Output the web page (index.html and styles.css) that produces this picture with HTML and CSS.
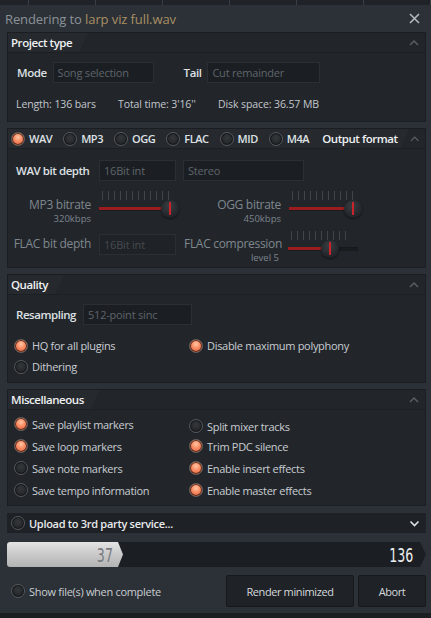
FILE: index.html
```html
<!DOCTYPE html>
<html>
<head>
<meta charset="utf-8">
<title>Rendering</title>
<link rel="stylesheet" href="styles.css">
</head>
<body>
<div class="strip"></div>
<div class="window">
	<div class="titlebar">
		<span class="title">Rendering to <span class="file">larp viz full.wav</span></span>
		<svg class="close" width="11" height="11" viewBox="0 0 11 11"><path d="M1 1L10 10M10 1L1 10" stroke="#b3b8bd" stroke-width="1.6" fill="none"/></svg>
	</div>

	<!-- project type -->
	<section class="panel project">
		<div class="panel-head">
			<div class="tab">Project type</div>
			<svg class="chev" width="10" height="7" viewBox="0 0 10 7"><polyline points="1,6 5,2 9,6" stroke="#5b6168" stroke-width="1.4" fill="none"/></svg>
		</div>
		<div class="row mode-row">
			<span class="lbl">Mode</span>
			<span class="combo w-mode">Song selection</span>
			<span class="lbl tail">Tail</span>
			<span class="combo w-tail">Cut remainder</span>
		</div>
		<div class="info-row">
			<span class="info i-len">Length: 136 bars</span>
			<span class="info i-time">Total time: 3'16''</span>
			<span class="info">Disk space: 36.57 MB</span>
		</div>
	</section>

	<!-- output format -->
	<section class="panel format">
		<div class="panel-head">
			<div class="tab wide">
				<label class="radio head-radio"><span class="dot on"></span>WAV</label>
				<label class="radio head-radio"><span class="dot"></span>MP3</label>
				<label class="radio head-radio"><span class="dot"></span>OGG</label>
				<label class="radio head-radio"><span class="dot"></span>FLAC</label>
				<label class="radio head-radio"><span class="dot"></span>MID</label>
				<label class="radio head-radio"><span class="dot"></span>M4A</label>
				<span class="head-title">Output format</span>
			</div>
			<svg class="chev" width="10" height="7" viewBox="0 0 10 7"><polyline points="1,6 5,2 9,6" stroke="#5b6168" stroke-width="1.4" fill="none"/></svg>
		</div>
		<div class="row wav-row">
			<span class="lbl wav-lbl">WAV bit depth</span>
			<span class="combo w-depth">16Bit int</span>
			<span class="combo w-stereo">Stereo</span>
		</div>
		<div class="field-row">
			<div class="side side-l">
				<div class="dim">MP3 bitrate</div>
				<div class="sub">320kbps</div>
			</div>
			<div class="slider s-mp3">
				<span class="fill" style="width:71px"></span>
				<span class="knob" style="left:71px"></span>
			</div>
			<div class="side side-r">
				<div class="dim">OGG bitrate</div>
				<div class="sub">450kbps</div>
			</div>
			<div class="slider s-ogg">
				<span class="fill" style="width:64px"></span>
				<span class="knob" style="left:64px"></span>
			</div>
		</div>
		<div class="field-row second">
			<div class="side side-l">
				<div class="dim">FLAC bit depth</div>
			</div>
			<span class="combo w-depth faded">16Bit int</span>
			<div class="side side-r">
				<div class="dim">FLAC compression</div>
				<div class="sub">level 5</div>
			</div>
			<div class="slider s-flac">
				<span class="fill" style="width:42px"></span>
				<span class="knob" style="left:42px"></span>
			</div>
		</div>
	</section>

	<!-- quality -->
	<section class="panel quality">
		<div class="panel-head">
			<div class="tab">Quality</div>
			<svg class="chev" width="10" height="7" viewBox="0 0 10 7"><polyline points="1,6 5,2 9,6" stroke="#5b6168" stroke-width="1.4" fill="none"/></svg>
		</div>
		<div class="row resample-row">
			<span class="lbl">Resampling</span>
			<span class="combo w-resample">512-point sinc</span>
		</div>
		<div class="opts">
			<label class="radio"><span class="dot on"></span>HQ for all plugins</label>
			<label class="radio"><span class="dot on"></span>Disable maximum polyphony</label>
			<label class="radio"><span class="dot"></span>Dithering</label>
		</div>
	</section>

	<!-- misc -->
	<section class="panel misc">
		<div class="panel-head">
			<div class="tab">Miscellaneous</div>
			<svg class="chev" width="10" height="7" viewBox="0 0 10 7"><polyline points="1,6 5,2 9,6" stroke="#5b6168" stroke-width="1.4" fill="none"/></svg>
		</div>
		<div class="opts misc-opts">
			<label class="radio"><span class="dot on"></span>Save playlist markers</label>
			<label class="radio nudge"><span class="dot"></span>Split mixer tracks</label>
			<label class="radio"><span class="dot on"></span>Save loop markers</label>
			<label class="radio"><span class="dot on"></span>Trim PDC silence</label>
			<label class="radio"><span class="dot"></span>Save note markers</label>
			<label class="radio"><span class="dot on"></span>Enable insert effects</label>
			<label class="radio"><span class="dot"></span>Save tempo information</label>
			<label class="radio"><span class="dot on"></span>Enable master effects</label>
		</div>
	</section>

	<div class="upload">
		<label class="radio up-radio"><span class="dot"></span>Upload to 3rd party service...</label>
		<svg class="chev-down" width="11" height="7" viewBox="0 0 11 7"><polyline points="1.5,1.5 5.5,5.5 9.5,1.5" stroke="#dfe2e5" stroke-width="1.6" fill="none"/></svg>
	</div>

	<div class="progress">
		<div class="progress-fill" style="width:116px"><span class="num">37</span></div>
		<span class="num total">136</span>
	</div>

	<div class="bottom">
		<label class="radio show"><span class="dot"></span>Show file(s) when complete</label>
		<button class="btn btn-render">Render minimized</button>
		<button class="btn btn-abort">Abort</button>
	</div>
</div>
</body>
</html>
```

FILE: styles.css
```css
*
{
	box-sizing: border-box;
}
body
{
	margin: 0;
	padding: 0;
	width: 431px;
	height: 618px;
	background: #1c1f22;
	font-family: "Open Sans", "Noto Sans", sans-serif;
	font-size: 11px;
	letter-spacing: -0.3px;
	color: #c6cacf;
	overflow: hidden;
}
.strip{
	height: 5px;
	background: #1f2327 repeating-linear-gradient(90deg, transparent 0 28px, #3a3f45 28px 29px, transparent 29px 67px);
}
.window{
	background: #2c3137;
	padding: 0 5px 6px 7px;
}

/* title */
.titlebar{
	height: 27px;
	display: flex;
	align-items: center;
	justify-content: space-between;
	padding: 0 6px 0 0;
	margin-left: -2px;
}
.title{
	font-size: 13px;
	letter-spacing: -0.1px;
	color: #8b9298;
}
.file{
	color: #a88f62;
}

/* panels */
.panel{
	background: #22262b;
	border: 1px solid #1a1d21;
	margin-bottom: 6px;
}
.panel-head{
	height: 20px;
	display: flex;
	align-items: center;
	justify-content: space-between;
	border-bottom: 1px solid #1c1f23;
}
.tab{
	height: 100%;
	display: flex;
	align-items: center;
	padding: 0 16px 0 3px;
	background: #262a2f;
	clip-path: polygon(0 0, 100% 0, calc(100% - 9px) 100%, 0 100%);
	color: #eef0f2;
	font-size: 11.5px;
	letter-spacing: -0.45px;
	font-weight: 600;
	white-space: nowrap;
}
.tab.wide{
	padding-left: 3px;
	padding-right: 12px;
	letter-spacing: -0.3px;
	font-size: 11px;
}
.chev{
	margin-right: 6px;
}
.row{
	display: flex;
	align-items: center;
}
.lbl{
	color: #dde0e3;
	font-weight: 600;
	font-size: 11.5px;
	letter-spacing: -0.45px;
	white-space: nowrap;
}
.combo{
	height: 21px;
	display: flex;
	align-items: center;
	padding-left: 4px;
	background: #1b1e22;
	border: 1px solid #2b2f34;
	color: #5f656c;
	font-size: 11px;
	letter-spacing: -0.2px;
}
.combo.faded{
	color: #464b51;
	background: #1f2226;
}

/* project type */
.mode-row{
	margin-top: 9px;
	padding-left: 9px;
}
.w-mode{
	width: 101px;
	margin-left: 6px;
}
.tail{
	margin-left: 30px;
}
.w-tail{
	width: 113px;
	margin-left: 6px;
}
.info-row{
	display: flex;
	margin-top: 14px;
	padding: 0 0 10px 8px;
	line-height: 14px;
}
.info{
	font-size: 10.5px;
	letter-spacing: -0.1px;
	color: #c2c6cb;
}
.i-len{
	width: 102px;
}
.i-time{
	width: 100px;
}

/* radio buttons */
.radio{
	display: flex;
	align-items: center;
	color: #c9cdd2;
	font-size: 11px;
	white-space: nowrap;
}
.dot{
	width: 14px;
	height: 14px;
	border-radius: 50%;
	margin-right: 4px;
	flex: none;
	border: 1px solid #55595e;
	background: radial-gradient(circle at 50% 40%, #34383c 0, #222528 70%);
	box-shadow: inset 0 0 0 1px #141618;
}
.dot.on{
	border-color: #66605d;
	background: radial-gradient(circle at 50% 35%, #ffc6a6 0, #f98f66 40%, #d9532f 100%);
	box-shadow: inset 0 0 0 1px #5a2a1c;
}
.head-radio{
	margin-right: 11px;
	letter-spacing: -0.45px;
	color: #dfe2e5;
}
.head-title{
	margin-left: 2px;
	color: #eef0f2;
	font-weight: 600;
	font-size: 11.5px;
	letter-spacing: -0.45px;
}

/* output format */
.format{
	padding-bottom: 5px;
}
.wav-row{
	margin-top: 11px;
	padding-left: 8px;
}
.wav-lbl{
	width: 83px;
}
.w-depth{
	width: 77px;
}
.w-stereo{
	width: 121px;
	margin-left: 7px;
}
.field-row{
	display: flex;
	align-items: flex-start;
	margin-top: 10px;
	height: 31px;
}
.field-row.second{
	margin-top: 9px;
}
.side{
	text-align: right;
	margin-right: 8px;
	padding-top: 7px;
	white-space: nowrap;
}
.side-l{
	width: 83px;
}
.side-r{
	width: 96px;
}
.second .side{
	padding-top: 6px;
}
.second .side-r{
	width: 95px;
	margin-right: 9px;
}
.second .w-depth{
	margin-top: 3px;
	margin-right: 8px;
}
.dim{
	color: #7f868d;
	font-size: 12px;
	line-height: 14px;
}
.sub{
	color: #7d848b;
	font-size: 9.5px;
	letter-spacing: 0;
	line-height: 13px;
}

/* sliders */
.slider{
	position: relative;
	width: 78px;
	height: 28px;
}
.s-mp3{
	margin-right: 8px;
}
.s-ogg{
	width: 72px;
}
.s-flac{
	width: 70px;
}
.slider::before{
	content: "";
	position: absolute;
	left: 3px;
	right: 8px;
	top: 0;
	height: 9px;
	background: repeating-linear-gradient(90deg, #40454b 0 1px, transparent 1px 6px);
}
.slider::after{
	content: "";
	position: absolute;
	left: 0;
	right: 0;
	top: 16px;
	height: 3px;
	background: #1a1d20;
	border-top: 1px solid #16181b;
}
.fill{
	position: absolute;
	left: 0;
	top: 16px;
	height: 3px;
	background: #9c1c1e;
	z-index: 1;
}
.knob{
	position: absolute;
	top: 9px;
	width: 18px;
	height: 18px;
	margin-left: -9px;
	border-radius: 50%;
	z-index: 2;
	background: radial-gradient(circle at 45% 35%, #393e43 0, #24282c 60%, #17191c 100%);
	box-shadow: 0 1px 2px rgba(0, 0, 0, 0.6);
}
.knob::after{
	content: "";
	position: absolute;
	left: 8px;
	top: 2px;
	width: 1.5px;
	height: 13px;
	background: #c8242a;
}

/* quality */
.resample-row{
	margin-top: 9px;
	padding-left: 8px;
}
.w-resample{
	width: 109px;
	margin-left: 7px;
}
.opts{
	display: grid;
	grid-template-columns: 175px 1fr;
	grid-auto-rows: 21px;
	padding: 10px 0 5px 6px;
}
.opts .radio:nth-child(3){
	grid-column: 1;
}
.misc-opts{
	grid-auto-rows: 22px;
	padding: 3px 0 4px 6px;
}
.nudge{
	padding-top: 4px;
}

/* upload + progress */
.upload{
	height: 20px;
	display: flex;
	align-items: center;
	justify-content: space-between;
	background: #1e2125;
	padding: 0 6px 0 4px;
	margin-top: 7px;
}
.up-radio{
	font-weight: 600;
	color: #e8eaec;
}
.progress{
	height: 25px;
	margin-top: 9px;
	display: flex;
	align-items: center;
	justify-content: space-between;
	background: #1b1e22;
	border-radius: 3px 0 0 3px;
	clip-path: polygon(0 0, calc(100% - 6px) 0, 100% 50%, calc(100% - 6px) 100%, 0 100%);
}
.progress-fill{
	height: 100%;
	display: flex;
	align-items: center;
	justify-content: flex-end;
	padding-right: 10px;
	background: linear-gradient(#e4e4e4, #c9c9c9 50%, #b3b3b3);
	border-radius: 3px 0 0 3px;
	clip-path: polygon(0 0, calc(100% - 5px) 0, 100% 50%, calc(100% - 5px) 100%, 0 100%);
}
.num{
	display: inline-block;
	font-family: "DejaVu Sans Condensed", "DejaVu Sans", sans-serif;
	font-size: 20px;
	line-height: 20px;
	letter-spacing: 0;
	transform: scaleX(0.7);
	transform-origin: right center;
	color: #777a7e;
}
.total{
	color: #eceef0;
	margin-right: 13px;
}

/* bottom */
.bottom{
	display: flex;
	align-items: center;
	margin-top: 8px;
}
.show{
	margin-left: 4px;
	flex: 1;
}
.btn{
	height: 32px;
	background: #1f2226;
	border: 1px solid #16181b;
	border-radius: 2px;
	color: #d5d9dd;
	font-family: "Open Sans", "Noto Sans", sans-serif;
	font-size: 11px;
	letter-spacing: -0.4px;
}
.btn-render{
	width: 128px;
	margin-right: 4px;
}
.btn-abort{
	width: 68px;
}
```
